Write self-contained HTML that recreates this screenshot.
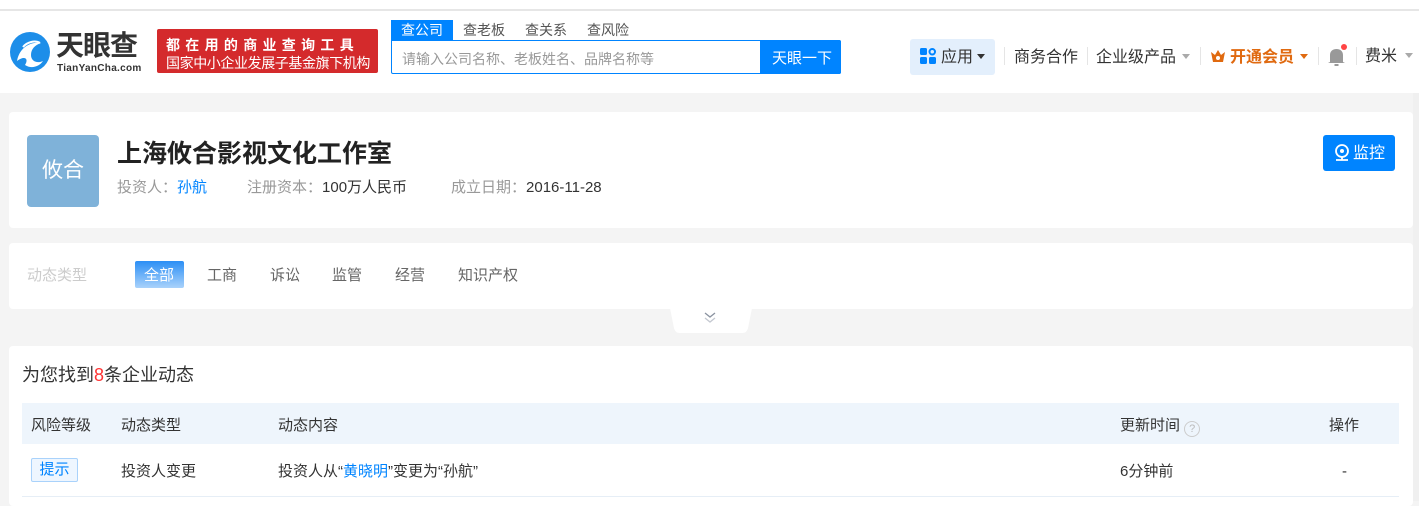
<!DOCTYPE html>
<html><head><meta charset="utf-8"><style>
*{margin:0;padding:0;box-sizing:border-box}
body{width:1419px;height:501px;overflow:hidden;background:#f4f4f4;font-family:"Liberation Sans","Noto Sans CJK SC",sans-serif;color:#333;position:relative}
.abs{position:absolute}
.hdr{left:0;top:0;width:1419px;height:93px;background:#fff}
.topline{left:0;top:9px;width:1419px;height:2px;background:#e6e6e6}
.card{background:#fff;border-radius:4px}
.t{white-space:nowrap;line-height:1;margin-top:2px}
.tri{display:inline-block;width:0;height:0;border-left:4px solid transparent;border-right:4px solid transparent;border-top:5px solid #333;vertical-align:3px;margin-left:4px}
</style></head><body>
<div class="abs hdr"></div>
<div class="abs topline"></div>
<svg class="abs" style="left:9px;top:31px" width="42" height="42" viewBox="0 0 42 42">
<circle cx="21" cy="21" r="20" fill="#1d8ee9"/>
<path d="M8 30 C10 18 20 10 32 12 C26 14 22 18 22 24 C22 30 28 33 34 30 C30 36 22 38 16 34 C20 28 16 24 8 30Z" fill="#fff"/>
<path d="M14 16 C18 11 26 9 31 12" stroke="#fff" stroke-width="2" fill="none"/>
</svg>
<div class="abs t" style="left:56px;top:30px;font-size:28px;font-weight:bold;color:#333;letter-spacing:-1px">天眼查</div>
<div class="abs t" style="left:57px;top:62px;font-size:10px;color:#333;font-weight:bold;letter-spacing:0.3px">TianYanCha.com</div>
<div class="abs" style="left:157px;top:29px;width:221px;height:44px;background:#d42a2c;border-radius:2px"></div>
<div class="abs t" style="left:166px;top:36px;font-size:14px;color:#fff;font-weight:bold;letter-spacing:5.3px">都在用的商业查询工具</div>
<div class="abs t" style="left:166px;top:54px;font-size:14px;color:#fff;letter-spacing:-0.4px">国家中小企业发展子基金旗下机构</div>
<div class="abs" style="left:391px;top:20px;width:62px;height:20px;background:#0084ff"></div>
<div class="abs t" style="left:401px;top:21px;font-size:14px;color:#fff">查公司</div>
<div class="abs t" style="left:463px;top:21px;font-size:14px;color:#555">查老板</div>
<div class="abs t" style="left:525px;top:21px;font-size:14px;color:#555">查关系</div>
<div class="abs t" style="left:587px;top:21px;font-size:14px;color:#555">查风险</div>
<div class="abs" style="left:391px;top:40px;width:450px;height:34px;border:1px solid #0084ff;border-radius:0 2px 2px 2px"></div>
<div class="abs t" style="left:402px;top:50px;font-size:14px;color:#999">请输入公司名称、老板姓名、品牌名称等</div>
<div class="abs" style="left:760px;top:40px;width:81px;height:34px;background:#0084ff;border-radius:0 2px 2px 0"></div>
<div class="abs t" style="left:772px;top:49px;font-size:15px;color:#fff">天眼一下</div>
<div class="abs" style="left:910px;top:39px;width:85px;height:36px;background:#e3effc;border-radius:3px"></div>
<svg class="abs" style="left:920px;top:48px" width="16" height="16"><rect x="0" y="0" width="7" height="7" rx="1.5" fill="#0084ff"/><rect x="9.5" y="1" width="5.5" height="5.5" rx="2.75" fill="none" stroke="#0084ff" stroke-width="2"/><rect x="0" y="9" width="7" height="7" rx="1.5" fill="#0084ff"/><rect x="9" y="9" width="7" height="7" rx="1.5" fill="#0084ff"/></svg>
<div class="abs t" style="left:941px;top:48px;font-size:16px;color:#333">应用<span class="tri"></span></div>
<div class="abs" style="left:1004px;top:47px;width:1px;height:18px;background:#e5e5e5"></div>
<div class="abs t" style="left:1014px;top:48px;font-size:16px;color:#333">商务合作</div>
<div class="abs" style="left:1087px;top:47px;width:1px;height:18px;background:#e5e5e5"></div>
<div class="abs t" style="left:1096px;top:48px;font-size:16px;color:#333">企业级产品<span class="tri" style="border-top-color:#aaa;margin-left:6px"></span></div>
<div class="abs" style="left:1200px;top:47px;width:1px;height:18px;background:#e5e5e5"></div>
<svg class="abs" style="left:1210px;top:49px" width="16" height="14"><path d="M1 3 L5 6 L8 1 L11 6 L15 3 L13 13 L3 13Z" fill="#e06a10"/><circle cx="8" cy="9" r="2" fill="#fff"/></svg>
<div class="abs t" style="left:1230px;top:48px;font-size:16px;color:#e06a10;font-weight:bold">开通会员<span class="tri" style="border-top-color:#e06a10;margin-left:6px"></span></div>
<div class="abs" style="left:1318px;top:47px;width:1px;height:18px;background:#e5e5e5"></div>
<svg class="abs" style="left:1328px;top:44px" width="20" height="24"><path d="M2 18 L2 11 C2 7 5 5 8.5 5 C12 5 15 7 15 11 L15 18 L17 19 L0 19Z" fill="#999"/><rect x="6.5" y="20" width="4" height="2" fill="#999"/><circle cx="16" cy="3" r="3" fill="#f44"/></svg>
<div class="abs" style="left:1356px;top:47px;width:1px;height:18px;background:#e5e5e5"></div>
<div class="abs t" style="left:1365px;top:47px;font-size:16px;color:#333">费米<span class="tri" style="border-top-color:#aaa;margin-left:8px"></span></div>
<div class="abs" style="left:1413px;top:93px;width:6px;height:408px;background:#f0f0f0"></div>

<div class="abs card" style="left:9px;top:112px;width:1404px;height:116px"></div>
<div class="abs" style="left:27px;top:135px;width:72px;height:72px;background:#7fb2d9;border-radius:4px;color:#fff;font-size:21px;text-align:center;line-height:72px">攸合</div>
<div class="abs t" style="left:117px;top:140px;font-size:25px;font-weight:bold;color:#222">上海攸合影视文化工作室</div>
<div class="abs t" style="left:117px;top:178px;font-size:15px;color:#999">投资人：<span style="color:#0084ff">孙航</span></div>
<div class="abs t" style="left:247px;top:178px;font-size:15px;color:#999">注册资本：<span style="color:#333">100万人民币</span></div>
<div class="abs t" style="left:451px;top:178px;font-size:15px;color:#999">成立日期：<span style="color:#333">2016-11-28</span></div>
<div class="abs" style="left:1323px;top:135px;width:72px;height:36px;background:#0084ff;border-radius:3px"></div>
<svg class="abs" style="left:1334px;top:144px" width="16" height="18"><circle cx="8" cy="7" r="6" fill="none" stroke="#fff" stroke-width="1.8"/><circle cx="8" cy="7" r="2" fill="#fff"/><path d="M2 16 H14 M8 13 V16" stroke="#fff" stroke-width="1.8"/></svg>
<div class="abs t" style="left:1353px;top:144px;font-size:16px;color:#fff">监控</div>

<div class="abs card" style="left:9px;top:243px;width:1404px;height:66px"></div>
<div class="abs t" style="left:27px;top:266px;font-size:15px;color:#ccc">动态类型</div>
<div class="abs" style="left:135px;top:261px;width:49px;height:27px;background:linear-gradient(#2b8ff5,#a9d2fb);border-radius:2px"></div>
<div class="abs t" style="left:144px;top:266px;font-size:15px;color:#fff">全部</div>
<div class="abs t" style="left:207px;top:266px;font-size:15px;color:#666">工商</div>
<div class="abs t" style="left:270px;top:266px;font-size:15px;color:#666">诉讼</div>
<div class="abs t" style="left:332px;top:266px;font-size:15px;color:#666">监管</div>
<div class="abs t" style="left:395px;top:266px;font-size:15px;color:#666">经营</div>
<div class="abs t" style="left:458px;top:266px;font-size:15px;color:#666">知识产权</div>
<svg class="abs" style="left:670px;top:308px" width="82" height="26"><path d="M0 0 H82 L78 20 Q77 25 72 25 H10 Q5 25 4 20Z" fill="#fff"/><path d="M35 5 L40 9 L45 5" stroke="#8a92a0" stroke-width="1.3" fill="none"/><path d="M35 10 L40 14 L45 10" stroke="#c4c8d0" stroke-width="1.3" fill="none"/></svg>

<div class="abs card" style="left:9px;top:346px;width:1404px;height:160px"></div>
<div class="abs t" style="left:22px;top:364px;font-size:18px;color:#333">为您找到<span style="color:#f33">8</span>条企业动态</div>
<div class="abs" style="left:22px;top:403px;width:1377px;height:41px;background:#eef5fc"></div>
<div class="abs t" style="left:31px;top:416px;font-size:15px;color:#333">风险等级</div>
<div class="abs t" style="left:121px;top:416px;font-size:15px;color:#333">动态类型</div>
<div class="abs t" style="left:278px;top:416px;font-size:15px;color:#333">动态内容</div>
<div class="abs t" style="left:1120px;top:416px;font-size:15px;color:#333">更新时间 <span style="display:inline-block;width:16px;height:16px;border:1px solid #ccc;border-radius:50%;font-size:11px;color:#bbb;text-align:center;line-height:14px;vertical-align:-2px">?</span></div>
<div class="abs t" style="left:1329px;top:416px;font-size:15px;color:#333">操作</div>
<div class="abs" style="left:31px;top:458px;width:47px;height:24px;background:#eef6ff;border:1px solid #a9d2fb;border-radius:2px;color:#0084ff;font-size:15px;text-align:center;line-height:22px">提示</div>
<div class="abs t" style="left:121px;top:462px;font-size:15px;color:#333">投资人变更</div>
<div class="abs t" style="left:278px;top:462px;font-size:15px;color:#333">投资人从“<span style="color:#0084ff">黄晓明</span>”变更为“孙航”</div>
<div class="abs t" style="left:1120px;top:462px;font-size:15px;color:#333">6分钟前</div>
<div class="abs t" style="left:1342px;top:462px;font-size:15px;color:#333">-</div>
<div class="abs" style="left:22px;top:496px;width:1377px;height:1px;background:#e6eef6"></div>
</body></html>
